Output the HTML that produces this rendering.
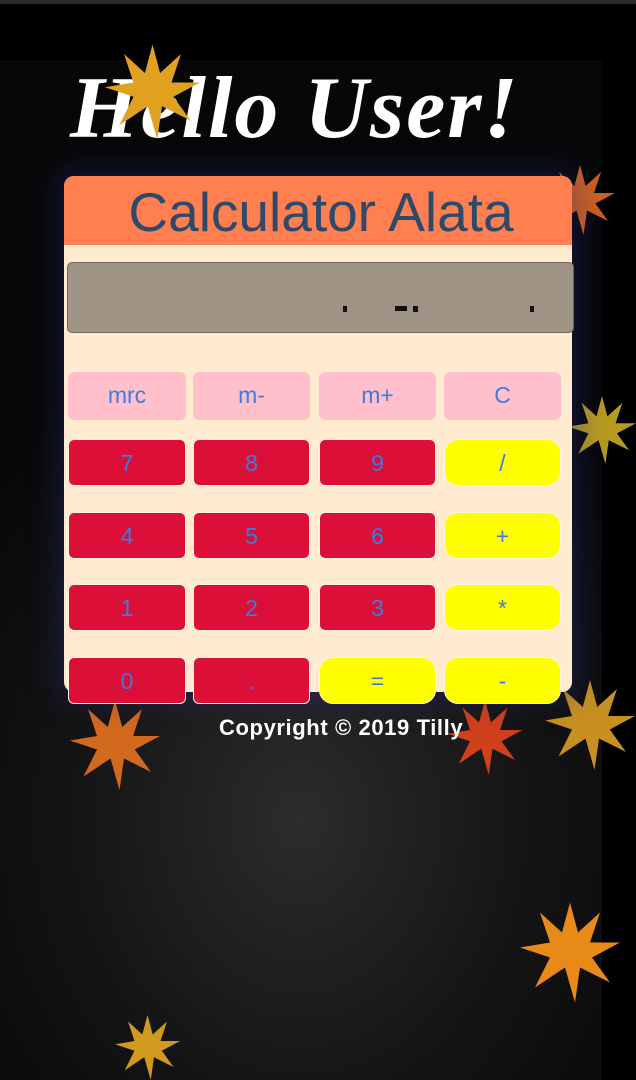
<!DOCTYPE html>
<html><head><style>
*{margin:0;padding:0;box-sizing:border-box}
html,body{width:636px;height:1080px;overflow:hidden}
body{background:#000;position:relative;font-family:"Liberation Sans",sans-serif}
.bg{position:absolute;left:0;top:60px;width:602px;height:1020px;background:radial-gradient(ellipse 420px 520px at 300px 760px,#2c2c2c 0%,#141414 55%,#070707 100%)}
.topbar{position:absolute;left:0;top:0;width:636px;height:4px;background:#2a2a2a}
.hello{position:absolute;left:70px;top:58px;font-family:"Liberation Serif",serif;font-style:italic;font-weight:bold;font-size:88px;color:#fff;letter-spacing:2px}
.card{position:absolute;left:64px;top:176px;width:508px;height:516px;background:#feebd0;border-radius:10px;box-shadow:0 0 30px 8px rgba(40,50,140,.35)}
.head{height:69px;background:#ff7f50;border-radius:10px 10px 0 0;color:#2d4a6a;font-size:55px;text-align:center;line-height:72px;padding-left:6px}
.disp{position:absolute;left:67px;top:262px;width:507px;height:71px;background:#9e9384;border:1px solid #6e665c;border-radius:5px}
.mk{position:absolute;background:#111;height:6px;top:306px}
.b{position:absolute;height:47px;color:#3d7be0;font-size:23px;text-align:center;line-height:47px;border-radius:6px}
.p{background:#ffc0cb;top:372px;height:48px}
.r{background:#dc0f38;border:1px solid #fff0e0}
.y{background:#ffff00;border-radius:14px;border:1px solid #fff5e0}
.c1{left:68px;width:118px}.c2{left:193px;width:117px}.c3{left:319px;width:117px}.c4{left:444px;width:117px}
.copy{position:absolute;left:219px;top:715px;color:#fff;font-weight:bold;font-size:22px;letter-spacing:0.6px}
.leaf{position:absolute}
</style></head><body>
<div class="bg"></div><div class="topbar"></div>
<svg class="leaf" style="left:60px;top:700px" width="110" height="90" viewBox="0 0 100 100"><polygon points="50,0 58,30 80,10 70,40 100,40 72,55 90,80 60,65 55,100 45,65 15,85 30,55 0,45 30,40 20,10 42,30" fill="#d2691e"/></svg>
<svg class="leaf" style="left:440px;top:700px" width="90" height="75" viewBox="0 0 100 100"><polygon points="50,0 58,30 80,10 70,40 100,40 72,55 90,80 60,65 55,100 45,65 15,85 30,55 0,45 30,40 20,10 42,30" fill="#d0401c"/></svg>
<svg class="leaf" style="left:545px;top:680px" width="90" height="90" viewBox="0 0 100 100"><polygon points="50,0 58,30 80,10 70,40 100,40 72,55 90,80 60,65 55,100 45,65 15,85 30,55 0,45 30,40 20,10 42,30" fill="#c89020"/></svg>
<svg class="leaf" style="left:568px;top:380px" width="68" height="100" viewBox="0 0 100 100"><polygon points="50,0 58,30 80,10 70,40 100,40 72,55 90,80 60,65 55,100 45,65 15,85 30,55 0,45 30,40 20,10 42,30" fill="#b89a20"/></svg>
<svg class="leaf" style="left:545px;top:150px" width="70" height="100" viewBox="0 0 100 100"><polygon points="50,0 58,30 80,10 70,40 100,40 72,55 90,80 60,65 55,100 45,65 15,85 30,55 0,45 30,40 20,10 42,30" fill="#d06020"/></svg>
<svg class="leaf" style="left:520px;top:900px" width="100" height="105" viewBox="0 0 100 100"><polygon points="50,0 58,30 80,10 70,40 100,40 72,55 90,80 60,65 55,100 45,65 15,85 30,55 0,45 30,40 20,10 42,30" fill="#e88a18"/></svg>
<svg class="leaf" style="left:100px;top:1015px" width="95" height="65" viewBox="0 0 100 100"><polygon points="50,0 58,30 80,10 70,40 100,40 72,55 90,80 60,65 55,100 45,65 15,85 30,55 0,45 30,40 20,10 42,30" fill="#d09a20"/></svg>
<div class="hello">Hello User!</div>
<svg class="leaf" style="left:105px;top:42px" width="95" height="100" viewBox="0 0 100 100"><polygon points="50,0 58,30 80,10 70,40 100,40 72,55 90,80 60,65 55,100 45,65 15,85 30,55 0,45 30,40 20,10 42,30" fill="#e0a020"/></svg>
<div class="card"><div class="head">Calculator Alata</div></div>
<div class="disp"></div>
<div class="mk" style="left:343px;width:4px"></div><div class="mk" style="left:395px;width:12px;height:5px"></div><div class="mk" style="left:413px;width:5px"></div><div class="mk" style="left:530px;width:4px"></div>
<div class="b p c1">mrc</div><div class="b p c2">m-</div><div class="b p c3">m+</div><div class="b p c4">C</div>
<div class="b r c1" style="top:439px">7</div><div class="b r c2" style="top:439px">8</div><div class="b r c3" style="top:439px">9</div><div class="b y c4" style="top:439px">/</div>
<div class="b r c1" style="top:512px">4</div><div class="b r c2" style="top:512px">5</div><div class="b r c3" style="top:512px">6</div><div class="b y c4" style="top:512px">+</div>
<div class="b r c1" style="top:584px">1</div><div class="b r c2" style="top:584px">2</div><div class="b r c3" style="top:584px">3</div><div class="b y c4" style="top:584px">*</div>
<div class="b r c1" style="top:657px">0</div><div class="b r c2" style="top:657px">.</div><div class="b y c3" style="top:657px">=</div><div class="b y c4" style="top:657px">-</div>
<div class="copy">Copyright © 2019 Tilly</div>
</body></html>
